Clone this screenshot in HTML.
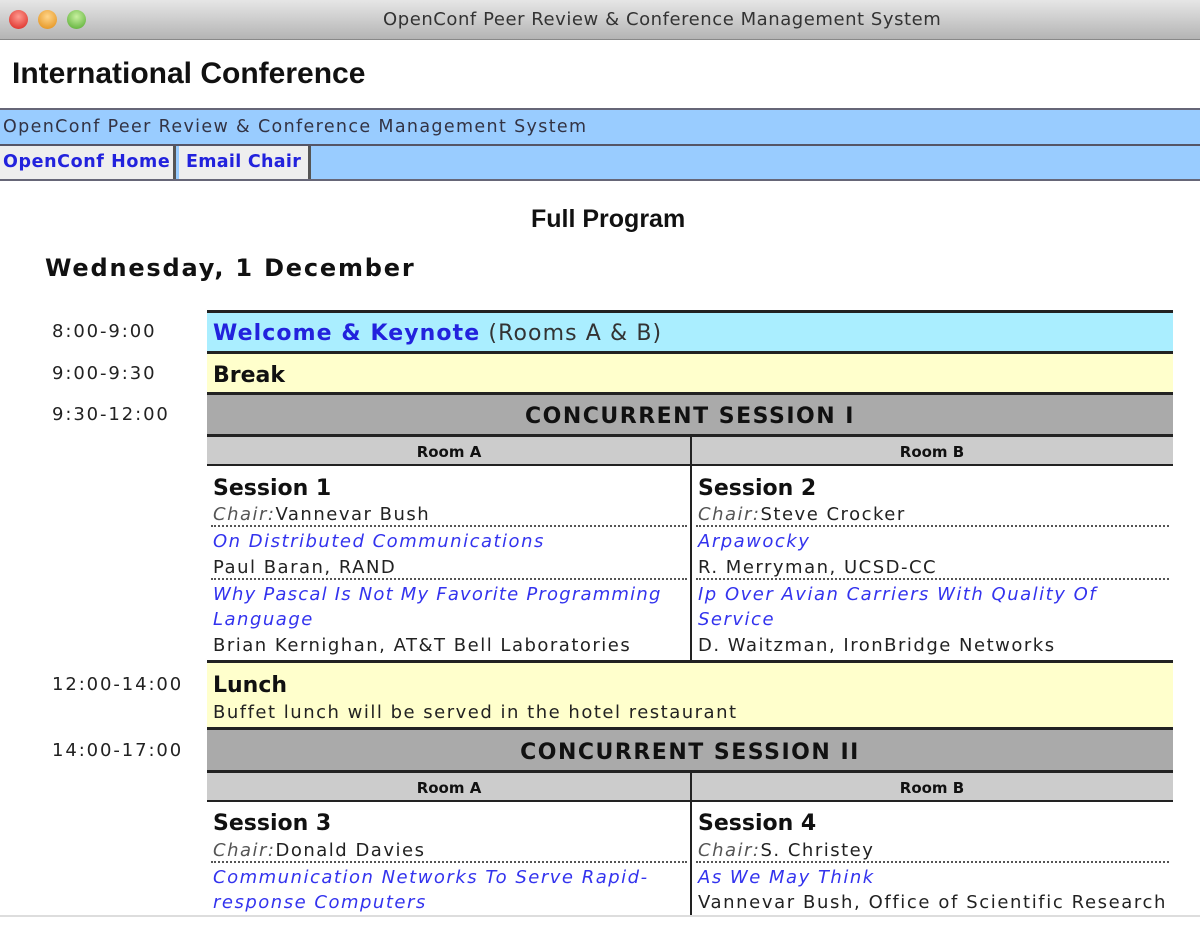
<!DOCTYPE html>
<html><head><meta charset="utf-8"><style>
*{margin:0;padding:0;box-sizing:border-box}
body{width:1200px;height:925px;background:#fff;position:relative;overflow:hidden;font-family:"DejaVu Sans","Liberation Sans",sans-serif;}
.a{position:absolute;white-space:nowrap}
.t{line-height:26px;font-size:18px;color:#222;letter-spacing:1.5px}
.tm{letter-spacing:1.9px}
.lk{color:#3333ee;font-style:italic}
.b{font-weight:bold}
.hl{position:absolute;height:3px;background:#222}
.dash{position:absolute;border-top:2px dotted #555;height:0}
</style></head><body>
<div class="a" style="left:0;top:0;width:1200px;height:40px;background:linear-gradient(#e6e6e6,#b4b4b4);border-bottom:1px solid #888"></div>
<div class="a" style="left:9px;top:10px;width:19px;height:19px;border-radius:50%;background:radial-gradient(circle at 50% 35%,#ff9a90,#d8201a)"></div>
<div class="a" style="left:38px;top:10px;width:19px;height:19px;border-radius:50%;background:radial-gradient(circle at 50% 35%,#ffd58a,#e08a10)"></div>
<div class="a" style="left:67px;top:10px;width:19px;height:19px;border-radius:50%;background:radial-gradient(circle at 50% 35%,#c8f0a0,#4fa82a)"></div>
<div class="a" style="left:383px;top:9px;font-size:18px;color:#333;letter-spacing:0.55px">OpenConf Peer Review &amp; Conference Management System</div>
<div class="a b" style="left:12px;top:57px;font-family:'Liberation Sans',sans-serif;font-size:30px;color:#111">International Conference</div>
<div class="a" style="left:0;top:108px;width:1200px;height:73px;background:#99ccff;border-top:2px solid #667;border-bottom:2px solid #667"></div>
<div class="a" style="left:0;top:144px;width:1200px;height:2px;background:#556"></div>
<div class="a" style="left:3px;top:117px;font-size:17.5px;color:#334;letter-spacing:1.35px">OpenConf Peer Review &amp; Conference Management System</div>
<div class="a" style="left:0;top:146px;width:176px;height:33px;background:#eee;border-right:3px solid #555"></div>
<div class="a" style="left:179px;top:146px;width:132px;height:33px;background:#eee;border-right:3px solid #555"></div>
<div class="a b" style="left:3px;top:152px;font-size:17.5px;color:#2222dd;letter-spacing:0.6px">OpenConf Home</div>
<div class="a b" style="left:186px;top:152px;font-size:17.5px;color:#2222dd;letter-spacing:0.3px">Email Chair</div>
<div class="a b" style="left:531px;top:205px;font-family:'Liberation Sans',sans-serif;font-size:25px;color:#111">Full Program</div>
<div class="a b" style="left:45px;top:254px;font-size:24px;color:#111;letter-spacing:1.8px">Wednesday, 1 December</div>
<div class="a t tm" style="left:52px;top:319px">8:00-9:00</div>
<div class="a t tm" style="left:52px;top:361px">9:00-9:30</div>
<div class="a t tm" style="left:52px;top:402px">9:30-12:00</div>
<div class="a t tm" style="left:52px;top:672px">12:00-14:00</div>
<div class="a t tm" style="left:52px;top:738px">14:00-17:00</div>
<div class="a" style="left:207px;top:311px;width:966px;height:41px;background:#aaeeff"></div>
<div class="a" style="left:207px;top:352px;width:966px;height:41px;background:#ffffcc"></div>
<div class="a" style="left:207px;top:393px;width:966px;height:42px;background:#aaaaaa"></div>
<div class="a" style="left:207px;top:435px;width:966px;height:31px;background:#cccccc"></div>
<div class="a" style="left:207px;top:662px;width:966px;height:66px;background:#ffffcc"></div>
<div class="a" style="left:207px;top:728px;width:966px;height:43px;background:#aaaaaa"></div>
<div class="a" style="left:207px;top:771px;width:966px;height:31px;background:#cccccc"></div>
<div class="hl" style="left:207px;top:310px;width:966px"></div>
<div class="hl" style="left:207px;top:351px;width:966px"></div>
<div class="hl" style="left:207px;top:392px;width:966px"></div>
<div class="hl" style="left:207px;top:434px;width:966px"></div>
<div class="hl" style="left:207px;top:464px;width:966px;height:2px"></div>
<div class="hl" style="left:207px;top:660px;width:966px"></div>
<div class="hl" style="left:207px;top:727px;width:966px"></div>
<div class="hl" style="left:207px;top:770px;width:966px"></div>
<div class="hl" style="left:207px;top:800px;width:966px;height:2px"></div>
<div class="a" style="left:690px;top:435px;width:2px;height:226px;background:#222"></div>
<div class="a" style="left:690px;top:771px;width:2px;height:145px;background:#222"></div>
<div class="a" style="left:0;top:915px;width:1200px;height:2px;background:#ddd"></div>
<div class="a" style="left:213px;top:319px;font-size:22px;line-height:30px;color:#333;letter-spacing:1.1px"><span class="b" style="color:#2222dd">Welcome &amp; Keynote</span> (Rooms A &amp; B)</div>
<div class="a b" style="left:213px;top:361px;font-size:22px;line-height:30px;color:#111">Break</div>
<div class="a b" style="left:207px;width:966px;top:402px;text-align:center;font-size:22px;line-height:30px;color:#111;letter-spacing:1.5px">CONCURRENT SESSION I</div>
<div class="a b" style="left:207px;width:484px;top:441px;text-align:center;font-size:15px;line-height:22px;color:#111">Room A</div>
<div class="a b" style="left:691px;width:482px;top:441px;text-align:center;font-size:15px;line-height:22px;color:#111">Room B</div>
<div class="a b" style="left:213px;top:474px;font-size:22px;line-height:30px;color:#111">Session 1</div>
<div class="a t" style="left:213px;top:502px"><i style="color:#555">Chair:</i>Vannevar Bush</div>
<div class="dash" style="left:211px;top:525px;width:476px"></div>
<div class="a t lk" style="left:213px;top:529px">On Distributed Communications</div>
<div class="a t" style="left:213px;top:555px">Paul Baran, RAND</div>
<div class="dash" style="left:211px;top:578px;width:476px"></div>
<div class="a t lk" style="left:213px;top:582px;letter-spacing:1.2px">Why Pascal Is Not My Favorite Programming</div>
<div class="a t lk" style="left:213px;top:607px">Language</div>
<div class="a t" style="left:213px;top:633px">Brian Kernighan, AT&amp;T Bell Laboratories</div>
<div class="a b" style="left:698px;top:474px;font-size:22px;line-height:30px;color:#111">Session 2</div>
<div class="a t" style="left:698px;top:502px"><i style="color:#555">Chair:</i>Steve Crocker</div>
<div class="dash" style="left:696px;top:525px;width:473px"></div>
<div class="a t lk" style="left:698px;top:529px">Arpawocky</div>
<div class="a t" style="left:698px;top:555px">R. Merryman, UCSD-CC</div>
<div class="dash" style="left:696px;top:578px;width:473px"></div>
<div class="a t lk" style="left:698px;top:582px">Ip Over Avian Carriers With Quality Of</div>
<div class="a t lk" style="left:698px;top:607px">Service</div>
<div class="a t" style="left:698px;top:633px">D. Waitzman, IronBridge Networks</div>
<div class="a b" style="left:213px;top:671px;font-size:22px;line-height:30px;color:#111">Lunch</div>
<div class="a t" style="left:213px;top:700px">Buffet lunch will be served in the hotel restaurant</div>
<div class="a b" style="left:207px;width:966px;top:738px;text-align:center;font-size:22px;line-height:30px;color:#111;letter-spacing:1.5px">CONCURRENT SESSION II</div>
<div class="a b" style="left:207px;width:484px;top:777px;text-align:center;font-size:15px;line-height:22px;color:#111">Room A</div>
<div class="a b" style="left:691px;width:482px;top:777px;text-align:center;font-size:15px;line-height:22px;color:#111">Room B</div>
<div class="a b" style="left:213px;top:809px;font-size:22px;line-height:30px;color:#111">Session 3</div>
<div class="a t" style="left:213px;top:838px"><i style="color:#555">Chair:</i>Donald Davies</div>
<div class="dash" style="left:211px;top:861px;width:476px"></div>
<div class="a t lk" style="left:213px;top:865px">Communication Networks To Serve Rapid-</div>
<div class="a t lk" style="left:213px;top:890px">response Computers</div>
<div class="a b" style="left:698px;top:809px;font-size:22px;line-height:30px;color:#111">Session 4</div>
<div class="a t" style="left:698px;top:838px"><i style="color:#555">Chair:</i>S. Christey</div>
<div class="dash" style="left:696px;top:861px;width:473px"></div>
<div class="a t lk" style="left:698px;top:865px">As We May Think</div>
<div class="a t" style="left:698px;top:890px;letter-spacing:1.6px">Vannevar Bush, Office of Scientific Research</div>
</body></html>
